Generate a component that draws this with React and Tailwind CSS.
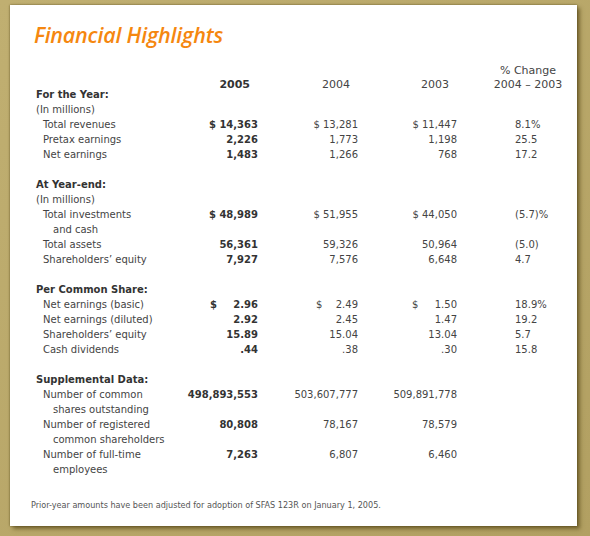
import React from 'react';

const sections = [
  {
    title: 'For the Year:',
    note: '(In millions)',
    rows: [
      { label: ['Total revenues'], v: ['$ 14,363', '$ 13,281', '$ 11,447'], pct: '8.1%' },
      { label: ['Pretax earnings'], v: ['2,226', '1,773', '1,198'], pct: '25.5' },
      { label: ['Net earnings'], v: ['1,483', '1,266', '768'], pct: '17.2' },
    ],
  },
  {
    title: 'At Year-end:',
    note: '(In millions)',
    rows: [
      { label: ['Total investments', 'and cash'], v: ['$ 48,989', '$ 51,955', '$ 44,050'], pct: '(5.7)%' },
      { label: ['Total assets'], v: ['56,361', '59,326', '50,964'], pct: '(5.0)' },
      { label: ['Shareholders’ equity'], v: ['7,927', '7,576', '6,648'], pct: '4.7' },
    ],
  },
  {
    title: 'Per Common Share:',
    rows: [
      { label: ['Net earnings (basic)'], dollar: true, v: ['2.96', '2.49', '1.50'], pct: '18.9%' },
      { label: ['Net earnings (diluted)'], v: ['2.92', '2.45', '1.47'], pct: '19.2' },
      { label: ['Shareholders’ equity'], v: ['15.89', '15.04', '13.04'], pct: '5.7' },
      { label: ['Cash dividends'], v: ['.44', '.38', '.30'], pct: '15.8' },
    ],
  },
  {
    title: 'Supplemental Data:',
    rows: [
      { label: ['Number of common', 'shares outstanding'], v: ['498,893,553', '503,607,777', '509,891,778'] },
      { label: ['Number of registered', 'common shareholders'], v: ['80,808', '78,167', '78,579'] },
      { label: ['Number of full-time', 'employees'], v: ['7,263', '6,807', '6,460'] },
    ],
  },
];

const colW = ['w-[80px] font-bold text-[#333]', 'w-[100px]', 'w-[99px]'];
const dollarW = ['w-[48px]', 'w-[42px]', 'w-[45px]'];

const Value = ({ value, dollar, i }) => (
  <div className={`${colW[i]} shrink-0 text-right`}>
    {dollar ? (
      <div className={`ml-auto flex justify-between ${dollarW[i]}`}>
        <span>$</span>
        <span>{value}</span>
      </div>
    ) : (
      <span className="whitespace-nowrap">{value}</span>
    )}
  </div>
);

const Section = ({ section }) => (
  <div className="mb-[15px]">
    <div className="font-bold text-[#333]">{section.title}</div>
    {section.note && <div>{section.note}</div>}
    {section.rows.map((row) => (
      <div key={row.label[0]} className="flex">
        <div className="w-[142px] shrink-0 pl-[7px]">
          {row.label.map((line, i) => (
            <div key={line} className={i > 0 ? 'pl-[10px]' : ''}>
              {line}
            </div>
          ))}
        </div>
        {row.v.map((value, i) => (
          <Value key={i} i={i} value={value} dollar={row.dollar} />
        ))}
        <div className="pl-[58px]">{row.pct}</div>
      </div>
    ))}
  </div>
);

export default function App() {
  return (
    <div className="h-[536px] w-[590px] overflow-hidden bg-gradient-to-br from-[#c0af71] to-[#b2a062] pt-[5px] pl-[10px]">
      <div className="h-[521px] w-[567px] bg-white pt-[14px] pl-[26px] text-[10px] leading-[15px] text-[#444] shadow-[0_0_2px_rgba(70,55,10,0.7),3px_3px_4px_rgba(70,55,10,0.55)] [font-family:'DejaVu_Sans',Verdana,sans-serif]">
        <h1 className="-ml-[2px] text-[21.5px] leading-[32px] font-semibold italic tracking-[-0.2px] text-[#f5870f] [font-family:'Open_Sans',sans-serif]">
          Financial Highlights
        </h1>

        <div className="mt-[12px] flex h-[24px] items-start pt-[1px] text-[11px] leading-[14px]">
          <div className="w-[142px] shrink-0" />
          <div className="flex w-[80px] shrink-0 flex-col items-end pr-[8px] font-bold text-[#333]">
            <span>&nbsp;</span>
            <span>2005</span>
          </div>
          <div className="flex w-[100px] shrink-0 flex-col items-end pr-[8px]">
            <span>&nbsp;</span>
            <span>2004</span>
          </div>
          <div className="flex w-[99px] shrink-0 flex-col items-end pr-[8px]">
            <span>&nbsp;</span>
            <span>2003</span>
          </div>
          <div className="ml-[36px] w-[70px] text-center whitespace-nowrap">
            <div>% Change</div>
            <div>2004 – 2003</div>
          </div>
        </div>

        {sections.map((s) => (
          <Section key={s.title} section={s} />
        ))}

        <p className="-ml-[5px] mt-[21px] text-[9px] text-[#555] [font-family:'DejaVu_Sans_Condensed','DejaVu_Sans',sans-serif]">
          Prior-year amounts have been adjusted for adoption of SFAS 123R on January 1, 2005.
        </p>
      </div>
    </div>
  );
}
